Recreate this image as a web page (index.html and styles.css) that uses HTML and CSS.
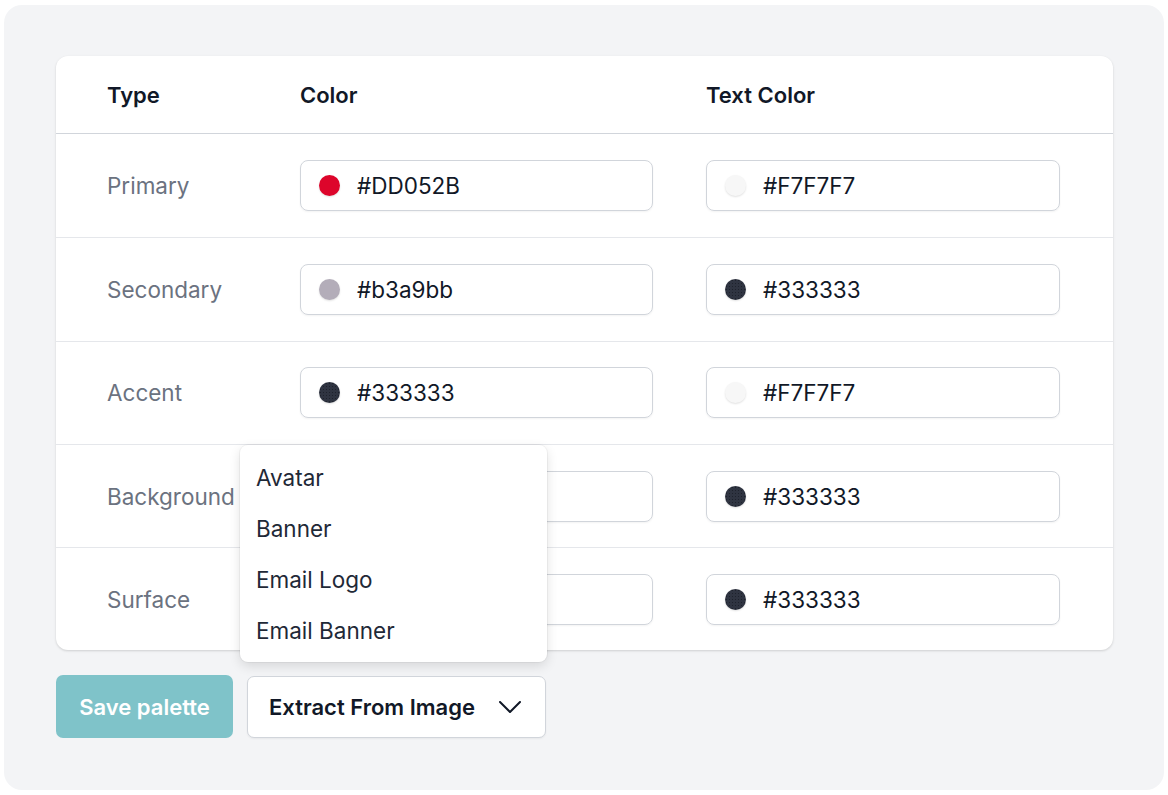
FILE: index.html
```html
<!DOCTYPE html>
<html>
	<head>
		<meta charset="utf-8">
		<title>Palette</title>
		<link rel="stylesheet" href="styles.css">
	</head>
	<body>
		<div class="panel">
			<div class="card">
				<div class="row head">
					<div>Type</div>
					<div>Color</div>
					<div>Text Color</div>
				</div>
				<div class="row">
					<div class="label">Primary</div>
					<div class="field"><span class="dot red"></span>#DD052B</div>
					<div class="field"><span class="dot light"></span>#F7F7F7</div>
				</div>
				<div class="row">
					<div class="label">Secondary</div>
					<div class="field"><span class="dot grey"></span>#b3a9bb</div>
					<div class="field"><span class="dot dark"></span>#333333</div>
				</div>
				<div class="row">
					<div class="label">Accent</div>
					<div class="field"><span class="dot dark"></span>#333333</div>
					<div class="field"><span class="dot light"></span>#F7F7F7</div>
				</div>
				<div class="row">
					<div class="label">Background</div>
					<div class="field"><span class="dot light"></span>#F7F7F7</div>
					<div class="field"><span class="dot dark"></span>#333333</div>
				</div>
				<div class="row">
					<div class="label">Surface</div>
					<div class="field"><span class="dot light"></span>#FFFFFF</div>
					<div class="field"><span class="dot dark"></span>#333333</div>
				</div>
			</div>
			<div class="actions">
				<button class="save">Save palette</button>
				<div class="extract-wrap">
					<ul class="menu">
						<li>Avatar</li>
						<li>Banner</li>
						<li>Email Logo</li>
						<li>Email Banner</li>
					</ul>
					<button class="extract">Extract From Image
						<svg width="22" height="12" viewBox="0 0 22 12"><path d="M1 1l10 10L21 1" fill="none" stroke="#111827" stroke-width="2" stroke-linecap="round" stroke-linejoin="round"/></svg>
					</button>
				</div>
			</div>
		</div>
	</body>
</html>
```
FILE: styles.css
```css
*{
	margin: 0;
	padding: 0;
	box-sizing: border-box;
}
body{
	background: #fff;
	font-family: Inter, "Liberation Sans", sans-serif;
	color: #111827;
	font-size: 22.5px;
}
.panel{
	margin: 5px 4px 5px 4px;
	height: 785px;
	background: #f3f4f6;
	border-radius: 18px;
	padding: 51px 51px 0 52px;
}
.card{
	background: #fff;
	border-radius: 12px;
	box-shadow: 0 1px 3px rgba(0,0,0,0.1), 0 1px 2px rgba(0,0,0,0.06);
}
.row{
	display: grid;
	grid-template-columns: 140px 353px 354px;
	column-gap: 53px;
	padding: 0 53px 0 51px;
	align-items: center;
	height: 103.3px;
	border-top: 1px solid #e5e7eb;
}
.row.head{
	height: 78px;
	border-top: 0;
	border-bottom: 1px solid #d1d5db;
	font-weight: 600;
	font-size: 22px;
}
.row.head + .row{
	border-top: 0;
	padding-bottom: 1px;
}
.label{
	color: #6b7280;
	white-space: nowrap;
}
.field{
	height: 51px;
	border: 1px solid #d1d5db;
	border-radius: 8px;
	box-shadow: 0 1px 2px rgba(0,0,0,0.05);
	display: flex;
	align-items: center;
	padding-left: 18px;
	gap: 17px;
	color: #111827;
}
.dot{
	width: 21px;
	height: 21px;
	border-radius: 50%;
	box-shadow: 0 1px 2px rgba(0,0,0,0.12);
}
.red{ background: #dd052b; }
.light{ background: #f7f7f7; }
.grey{ background: #b3adb9; }
.dark{
	background: #2f3441;
	background-image: radial-gradient(#1e222c 0.6px, transparent 0.8px);
	background-size: 3px 3px;
}
.actions{
	display: flex;
	gap: 14px;
	margin-top: 25px;
	align-items: flex-start;
}
button{
	font-family: inherit;
	font-size: 22px;
	font-weight: 600;
	border-radius: 7px;
	cursor: pointer;
}
.save{
	width: 177px;
	height: 63px;
	background: #7fc3c9;
	color: #fff;
	border: 0;
}
.extract-wrap{
	position: relative;
	margin-top: 1px;
}
.extract{
	width: 299px;
	height: 62px;
	background: #fff;
	color: #111827;
	border: 1px solid #d1d5db;
	box-shadow: 0 1px 2px rgba(0,0,0,0.05);
	display: flex;
	align-items: center;
	justify-content: space-between;
	padding: 0 24px 0 21px;
}
.menu{
	list-style: none;
	position: absolute;
	left: -7px;
	bottom: 76px;
	width: 307px;
	background: #fff;
	border-radius: 8px;
	box-shadow: 0 4px 12px rgba(0,0,0,0.12), 0 0 0 1px rgba(0,0,0,0.04);
	padding: 7px 0 6px;
	color: #1f2937;
}
.menu li{
	height: 51px;
	line-height: 51px;
	padding-left: 16px;
}
```
